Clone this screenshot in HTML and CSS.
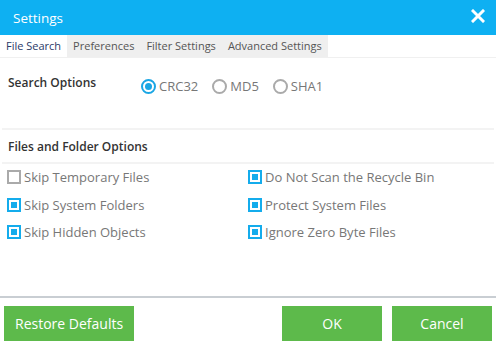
FILE: index.html
```html
<!DOCTYPE html>
<html lang="en">
<head>
    <link rel="stylesheet" href="styles.css">
</head>
<body>
    <div class="dialog">
        <!-- Title Bar -->
        <div class="titlebar">
            <span class="title">Settings</span>
            <svg class="close" width="14" height="14" viewBox="0 0 14 14">
                <path d="M2 2 L12 12 M12 2 L2 12" stroke="#fff" stroke-width="3" stroke-linecap="square"/>
            </svg>
        </div>

        <!-- Tabs -->
        <div class="tabs">
            <div class="tab active">File Search</div>
            <div class="tab">Preferences</div>
            <div class="tab">Filter Settings</div>
            <div class="tab">Advanced Settings</div>
        </div>

        <!-- Search Options -->
        <div class="search-row">
            <div class="label">Search Options</div>
            <div class="radios">
                <span class="radio checked"></span><span class="opt">CRC32</span>
                <span class="radio"></span><span class="opt">MD5</span>
                <span class="radio"></span><span class="opt">SHA1</span>
            </div>
        </div>

        <div class="section-head">Files and Folder Options</div>

        <div class="checks">
            <div class="check"><span class="box"></span>Skip Temporary Files</div>
            <div class="check"><span class="box on"></span>Do Not Scan the Recycle Bin</div>
            <div class="check"><span class="box on"></span>Skip System Folders</div>
            <div class="check"><span class="box on"></span>Protect System Files</div>
            <div class="check"><span class="box on"></span>Skip Hidden Objects</div>
            <div class="check"><span class="box on"></span>Ignore Zero Byte Files</div>
        </div>

        <!-- Footer -->
        <div class="footer">
            <button class="btn restore">Restore Defaults</button>
            <div class="right">
                <button class="btn wide">OK</button>
                <button class="btn wide">Cancel</button>
            </div>
        </div>
    </div>
</body>
</html>
```
FILE: styles.css
```css
/* General Styles */
body {
    margin: 0;
    padding: 0;
    font-family: "Open Sans", Arial, sans-serif;
    background-color: #ffffff;
}

.dialog {
    width: 496px;
    height: 347px;
    display: flex;
    flex-direction: column;
}

/* Title Bar */
.titlebar {
    height: 35px;
    background-color: #0eb0f2;
    display: flex;
    align-items: center;
    justify-content: space-between;
    padding: 0 11px 0 13px;
}

.title {
    color: #ffffff;
    font-size: 13.5px;
}

.close {
    margin-top: -4px;
}

/* Tabs */
.tabs {
    display: flex;
    height: 22px;
    border-bottom: 1px solid #f0f0f0;
}

.tab {
    background-color: #efefef;
    color: #555555;
    font-size: 11px;
    padding: 0 6px;
    line-height: 22px;
}

.tab.active {
    background-color: #ffffff;
    color: #2b3a67;
}

/* Search Options */
.search-row {
    display: flex;
    align-items: flex-start;
    height: 54px;
    padding: 16px 0 0 6px;
    margin: 0 2px;
    border-bottom: 2px solid #f3f3f3;
}

.label,
.section-head {
    font-size: 12px;
    font-weight: 600;
    color: #333333;
}

.label {
    width: 133px;
}

.radios {
    display: flex;
    align-items: center;
    margin-top: 3px;
}

.radio {
    width: 11px;
    height: 11px;
    border: 2px solid #aaaaaa;
    border-radius: 50%;
    margin-right: 3px;
    position: relative;
}

.radio.checked {
    border-color: #1aa6e4;
}

.radio.checked::after {
    content: "";
    position: absolute;
    left: 2px;
    top: 2px;
    width: 7px;
    height: 7px;
    border-radius: 50%;
    background-color: #1aa6e4;
}

.opt {
    font-size: 13px;
    color: #777777;
    margin-right: 14px;
}

.section-head {
    margin: 0 2px;
    padding: 8px 6px;
    height: 16px;
    border-bottom: 2px solid #f3f3f3;
}

/* Checkbox Grid */
.checks {
    display: grid;
    grid-template-columns: 241px 1fr;
    row-gap: 9.5px;
    padding: 4px 0 0 7px;
}

.check {
    display: flex;
    align-items: center;
    font-size: 13px;
    color: #777777;
    height: 18px;
}

.box {
    width: 10px;
    height: 10px;
    border: 2px solid #aaaaaa;
    margin-right: 3px;
    position: relative;
}

.box.on {
    border-color: #14acec;
}

.box.on::after {
    content: "";
    position: absolute;
    left: 2px;
    top: 2px;
    width: 6px;
    height: 6px;
    background-color: #14acec;
}

/* Footer */
.footer {
    margin-top: auto;
    border-top: 2px solid #c9ced3;
    display: flex;
    justify-content: space-between;
    padding: 8px 4px 6px 4px;
}

.right {
    display: flex;
    gap: 10px;
}

.btn {
    height: 35px;
    background-color: #5dba4b;
    color: #ffffff;
    border: none;
    font-family: "Open Sans", Arial, sans-serif;
    font-size: 14px;
    padding: 0 11px;
    cursor: pointer;
}

.btn.wide {
    width: 100px;
}
```
